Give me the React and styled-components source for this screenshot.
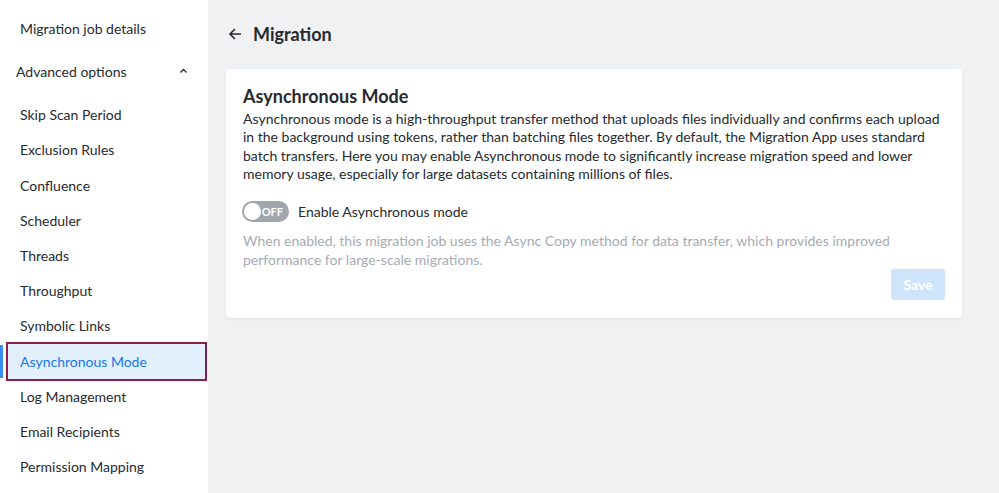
import React, { useState } from 'react';
import styled, { createGlobalStyle } from 'styled-components';

const GlobalStyle = createGlobalStyle`
    html, body {
        margin: 0;
        height: 100%;
    }
    body {
        font-family: Lato, "Noto Sans", "Liberation Sans", sans-serif;
        color: #262a30;
        background: #f0f1f3;
    }
    #root {
        height: 100%;
    }
`;

const Page = styled.div`
    display: flex;
    height: 493px;
    overflow: hidden;
`;

const Sidebar = styled.nav`
    width: 208px;
    flex-shrink: 0;
    background: #fff;
    padding-top: 11px;
    box-sizing: border-box;
`;

const NavItem = styled.div`
    position: relative;
    display: flex;
    align-items: center;
    height: 35.2px;
    margin: 0 3px 0 8px;
    padding-left: 12px;
    box-sizing: border-box;
    font-size: 14px;
    color: ${p => (p.active ? '#1677e8' : '#262a30')};
    background: ${p => (p.active ? '#e2f0fd' : 'transparent')};
    outline: ${p => (p.active ? '2px solid #8d1d47' : 'none')};
    outline-offset: 0;

    &::before {
        content: '';
        display: ${p => (p.active ? 'block' : 'none')};
        position: absolute;
        left: -8px;
        top: 1px;
        bottom: 1px;
        width: 3px;
        background: #3b8ef0;
    }
`;

const GroupHeader = styled.div`
    display: flex;
    align-items: center;
    justify-content: space-between;
    height: 36px;
    margin: 7px 0 8px;
    padding: 0 20px 0 16px;
    font-size: 14px;
`;

const Main = styled.main`
    flex: 1;
    padding: 16px 18px;
`;

const PageTitle = styled.h1`
    display: flex;
    align-items: center;
    gap: 11px;
    margin: 0 0 17px 2px;
    height: 36px;
    font-size: 18px;
    font-weight: 700;
`;

const Card = styled.section`
    width: 736px;
    box-sizing: border-box;
    background: #fff;
    border-radius: 4px;
    box-shadow: 0 1px 3px rgba(0, 0, 0, 0.07);
    padding: 15px 17px 18px;
`;

const CardTitle = styled.h2`
    margin: 0 0 2px;
    font-size: 18px;
    line-height: 24px;
    font-weight: 700;
`;

const Text = styled.p`
    margin: 0;
    font-size: 14px;
    line-height: ${p => (p.muted ? '19px' : '18.3px')};
    color: ${p => (p.muted ? '#a6abb2' : '#262a30')};
`;

const ToggleRow = styled.label`
    display: flex;
    align-items: center;
    gap: 9px;
    margin: 18px 0 9px;
    font-size: 14px;
    cursor: pointer;
`;

const Switch = styled.span`
    display: flex;
    align-items: center;
    justify-content: ${p => (p.on ? 'flex-start' : 'flex-end')};
    width: 47px;
    height: 21px;
    margin-left: -1px;
    padding: 0 6px 0 2px;
    box-sizing: border-box;
    border-radius: 11px;
    background: ${p => (p.on ? '#1677e8' : '#a1a6ae')};
    position: relative;
    font-size: 11px;
    font-weight: 700;
    color: #fff;
`;

const Knob = styled.span`
    position: absolute;
    top: 2px;
    left: ${p => (p.on ? '28px' : '2px')};
    width: 17px;
    height: 17px;
    border-radius: 50%;
    background: #fff;
`;

const Actions = styled.div`
    display: flex;
    justify-content: flex-end;
`;

const SaveButton = styled.button`
    width: 54px;
    height: 31px;
    border: none;
    border-radius: 3px;
    background: #cde4fb;
    color: #fff;
    font-family: inherit;
    font-size: 14px;
    font-weight: 700;
`;

const items = [
    'Skip Scan Period',
    'Exclusion Rules',
    'Confluence',
    'Scheduler',
    'Threads',
    'Throughput',
    'Symbolic Links',
    'Asynchronous Mode',
    'Log Management',
    'Email Recipients',
    'Permission Mapping',
];

const App = () => {
    const [enabled, setEnabled] = useState(false);

    return (
        <Page>
            <GlobalStyle />
            <Sidebar>
                <NavItem>Migration job details</NavItem>
                <GroupHeader>
                    Advanced options
                    <svg width="9" height="6" viewBox="0 0 9 6" fill="none">
                        <path d="M1.5 4.5L4.5 1.5L7.5 4.5" stroke="#262a30" strokeWidth="1.3" />
                    </svg>
                </GroupHeader>
                {items.map(name => (
                    <NavItem key={name} active={name === 'Asynchronous Mode'}>
                        {name}
                    </NavItem>
                ))}
            </Sidebar>
            <Main>
                <PageTitle>
                    <svg width="14" height="14" viewBox="0 0 14 14" fill="none">
                        <path d="M13 7H2M7 2L2 7L7 12" stroke="#262a30" strokeWidth="1.6" />
                    </svg>
                    Migration
                </PageTitle>
                <Card>
                    <CardTitle>Asynchronous Mode</CardTitle>
                    <Text>
                        Asynchronous mode is a high-throughput transfer method that uploads files individually and
                        confirms each upload in the background using tokens, rather than batching files together. By
                        default, the Migration App uses standard batch transfers. Here you may enable Asynchronous mode
                        to significantly increase migration speed and lower memory usage, especially for large datasets
                        containing millions of files.
                    </Text>
                    <ToggleRow onClick={() => setEnabled(v => !v)}>
                        <Switch on={enabled}>
                            <Knob on={enabled} />
                            {enabled ? 'ON' : 'OFF'}
                        </Switch>
                        Enable Asynchronous mode
                    </ToggleRow>
                    <Text muted>
                        When enabled, this migration job uses the Async Copy method for data transfer, which provides
                        improved performance for large-scale migrations.
                    </Text>
                    <Actions>
                        <SaveButton disabled>Save</SaveButton>
                    </Actions>
                </Card>
            </Main>
        </Page>
    );
};

export default App;
